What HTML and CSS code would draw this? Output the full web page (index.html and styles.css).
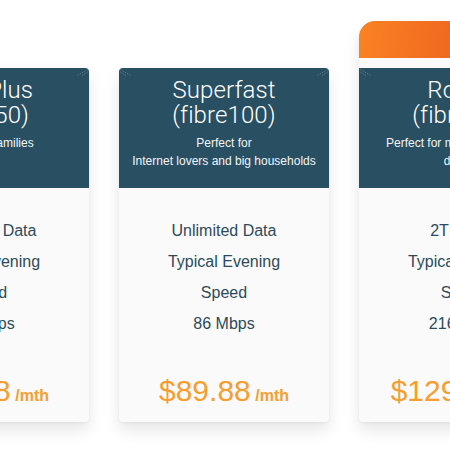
FILE: index.html
```html
<!DOCTYPE html>
<html>
<head>
<meta charset="utf-8">
<link rel="stylesheet" href="styles.css">
</head>
<body>
<div class="plans">
  <div class="card">
    <div class="head">
      <svg class="deco deco-l" width="12" height="8" viewBox="0 0 12 8"><path d="M0.5 0.5 L11 6.5" stroke="#c4d2d9" stroke-width="0.8" stroke-dasharray="1 1.6"/><path d="M0.5 3 L6 7" stroke="#c4d2d9" stroke-width="0.8" stroke-dasharray="1 1.6"/></svg>
      <svg class="deco deco-r" width="12" height="8" viewBox="0 0 12 8"><path d="M11.5 0.5 L1 6.5" stroke="#c4d2d9" stroke-width="0.8" stroke-dasharray="1 1.6"/><path d="M11.5 3 L6 7" stroke="#c4d2d9" stroke-width="0.8" stroke-dasharray="1 1.6"/></svg>
      <div class="title">Fast Plus<br>(fibre50)</div>
      <div class="sub">Perfect for families</div>
    </div>
    <div class="body">
      <ul class="feats">
        <li>Unlimited Data</li>
        <li>Typical Evening</li>
        <li>Speed</li>
        <li>43 Mbps</li>
      </ul>
      <div class="price">$69.88<span class="per"> /mth</span></div>
    </div>
  </div>
  <div class="card">
    <div class="head">
      <svg class="deco deco-l" width="12" height="8" viewBox="0 0 12 8"><path d="M0.5 0.5 L11 6.5" stroke="#c4d2d9" stroke-width="0.8" stroke-dasharray="1 1.6"/><path d="M0.5 3 L6 7" stroke="#c4d2d9" stroke-width="0.8" stroke-dasharray="1 1.6"/></svg>
      <svg class="deco deco-r" width="12" height="8" viewBox="0 0 12 8"><path d="M11.5 0.5 L1 6.5" stroke="#c4d2d9" stroke-width="0.8" stroke-dasharray="1 1.6"/><path d="M11.5 3 L6 7" stroke="#c4d2d9" stroke-width="0.8" stroke-dasharray="1 1.6"/></svg>
      <div class="title">Superfast<br>(fibre100)</div>
      <div class="sub">Perfect for<br>Internet lovers and big households</div>
    </div>
    <div class="body">
      <ul class="feats">
        <li>Unlimited Data</li>
        <li>Typical Evening</li>
        <li>Speed</li>
        <li>86 Mbps</li>
      </ul>
      <div class="price">$89.88<span class="per"> /mth</span></div>
    </div>
  </div>
  <div class="card card-pop">
    <div class="banner"></div>
    <div class="head">
      <svg class="deco deco-l" width="12" height="8" viewBox="0 0 12 8"><path d="M0.5 0.5 L11 6.5" stroke="#c4d2d9" stroke-width="0.8" stroke-dasharray="1 1.6"/><path d="M0.5 3 L6 7" stroke="#c4d2d9" stroke-width="0.8" stroke-dasharray="1 1.6"/></svg>
      <div class="title">Rocket<br>(fibre200)</div>
      <div class="sub">Perfect for multiple users and<br>devices</div>
    </div>
    <div class="body">
      <ul class="feats">
        <li>2TB Data</li>
        <li>Typical Evening</li>
        <li>Speed</li>
        <li>216 Mbps</li>
      </ul>
      <div class="price">$129.88<span class="per"> /mth</span></div>
    </div>
  </div>
</div>
</body>
</html>
```
FILE: styles.css
```css
html, body {
  margin: 0;
  padding: 0;
  background: #ffffff;
  overflow: hidden;
}
body {
  width: 450px;
  height: 452px;
  font-family: "Liberation Sans", Arial, sans-serif;
}
.plans {
  display: flex;
  justify-content: center;
  align-items: flex-end;
  gap: 30px;
  width: 448px;
  height: 422px;
}
.card {
  flex: 0 0 210px;
  width: 210px;
  background: #fafafa;
  border-radius: 4px;
  box-shadow: 0 8px 16px rgba(0, 0, 0, 0.10), 0 1px 3px rgba(0, 0, 0, 0.05);
  display: flex;
  flex-direction: column;
}
.card-pop {
  border-radius: 16px 16px 4px 4px;
}
.banner {
  height: 37px;
  margin-bottom: 10px;
  border-radius: 16px 16px 0 0;
  background: linear-gradient(100deg, #f98323 0%, #ef6420 50%, #e5521e 100%);
}
.head {
  position: relative;
  box-sizing: border-box;
  height: 120px;
  padding: 10px 8px 0;
  background: #294f62;
  border-radius: 4px 4px 0 0;
  color: #ffffff;
  text-align: center;
}
.card-pop .head {
  border-radius: 0;
}
.deco {
  position: absolute;
  top: 1px;
  opacity: 0.6;
}
.deco-l { left: 1px; }
.deco-r { right: 1px; }
.title {
  font-family: Roboto, "Liberation Sans", sans-serif;
  font-weight: 300;
  font-size: 24px;
  line-height: 25px;
  letter-spacing: 0.1px;
}
.sub {
  margin-top: 6px;
  font-size: 12px;
  line-height: 18px;
  color: #f2f5f7;
}
.body {
  padding: 27px 0 13px;
  text-align: center;
}
.feats {
  list-style: none;
  margin: 0 0 34px;
  padding: 0;
  font-size: 16px;
  line-height: 31px;
  color: #2c4a5b;
}
.price {
  font-size: 30px;
  line-height: 36px;
  color: #f89d2e;
}
.per {
  font-size: 16px;
  line-height: 16px;
  font-weight: bold;
}
```
